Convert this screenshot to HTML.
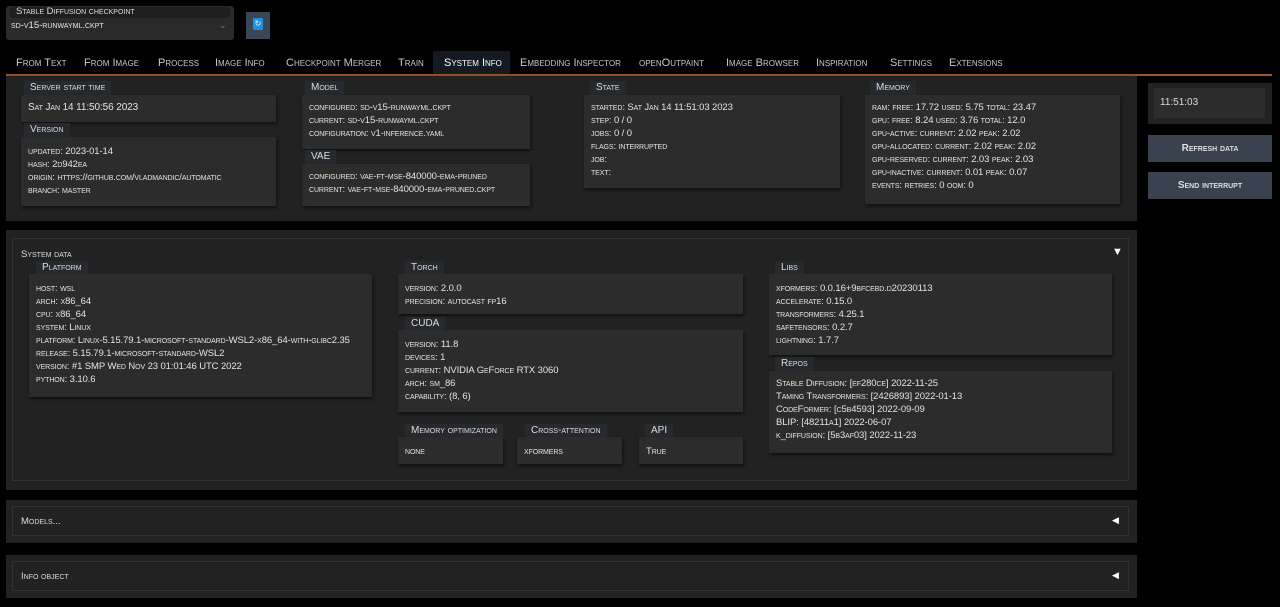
<!DOCTYPE html>
<html><head><meta charset="utf-8">
<style>
*{box-sizing:border-box;margin:0;padding:0}
body{width:1280px;height:607px;background:#000;font-family:"Liberation Sans",sans-serif;font-variant:small-caps;color:#ddd;position:relative;overflow:hidden;font-size:10px}
.a{position:absolute}
.panel{background:#222;box-shadow:0 2px 4px #000}
.box{position:absolute;background:#2c2c2c;box-shadow:1px 2px 3px #111;padding:6px 7px;line-height:13px;font-size:9.5px;color:#e4e4e4;letter-spacing:-0.1px}
.lbl{position:absolute;background:#262a2e;color:#ddd;font-size:10px;height:14px;line-height:14px;padding:0 6px}
.tab{position:absolute;top:55px;font-size:11px;color:#c8c8c8;line-height:16px}
.btn{position:absolute;left:1148px;width:124px;height:27px;background:#3a4250;color:#ddd;font-size:10px;text-align:center;line-height:27px;font-weight:bold;box-shadow:0 1px 2px #000}
</style></head><body>
<div class="a" style="left:6px;top:6px;width:228px;height:34px;background:#2a2a2a;border-radius:3px"></div>
<div class="a" style="left:10px;top:7px;width:220px;height:11px;background:#1e1e1e;border-radius:3px"></div>
<div class="a" style="left:16px;top:6px;font-size:9.5px;color:#ddd">Stable Diffusion checkpoint</div>
<div class="a" style="left:11px;top:20px;font-size:9.5px;color:#e8e8e8">sd-v15-runwayml.ckpt</div>
<div class="a" style="left:219px;top:20px;font-size:9px;color:#777">⌄</div>
<div class="a" style="left:246px;top:12px;width:24px;height:27px;background:#3a4555"></div>
<div class="a" style="left:253px;top:18px;width:10px;height:12px;background:#1e90e0;border-radius:1px;color:#fff;font-size:8px;text-align:center;line-height:12px">↻</div>

<div class="a" style="left:433px;top:51px;width:77px;height:23px;background:#131a22"></div>
<div class="tab" style="left:16px">From Text</div>
<div class="tab" style="left:84px">From Image</div>
<div class="tab" style="left:158px">Process</div>
<div class="tab" style="left:215px">Image Info</div>
<div class="tab" style="left:286px">Checkpoint Merger</div>
<div class="tab" style="left:398px">Train</div>
<div class="tab" style="left:444px;color:#fff">System Info</div>
<div class="tab" style="left:520px">Embedding Inspector</div>
<div class="tab" style="left:639px">openOutpaint</div>
<div class="tab" style="left:726px">Image Browser</div>
<div class="tab" style="left:816px">Inspiration</div>
<div class="tab" style="left:890px">Settings</div>
<div class="tab" style="left:949px">Extensions</div>
<div class="a" style="left:6px;top:74px;width:1266px;height:2px;background:#a0552a"></div>

<div class="a panel" style="left:6px;top:76px;width:1131px;height:145px"></div>
<div class="lbl" style="left:24px;top:81px">Server start time</div>
<div class="box" style="left:21px;top:95px;width:255px;height:27px;font-size:10px">Sat Jan 14 11:50:56 2023</div>
<div class="lbl" style="left:24px;top:123px">Version</div>
<div class="box" style="left:21px;top:137px;width:255px;height:69px;padding-top:8px">updated: 2023-01-14<br>hash: 2d942ea<br>origin: https://github.com/vladmandic/automatic<br>branch: master</div>
<div class="lbl" style="left:305px;top:81px">Model</div>
<div class="box" style="left:302px;top:95px;width:228px;height:54px">configured: sd-v15-runwayml.ckpt<br>current: sd-v15-runwayml.ckpt<br>configuration: v1-inference.yaml</div>
<div class="lbl" style="left:305px;top:150px">VAE</div>
<div class="box" style="left:302px;top:164px;width:228px;height:42px">configured: vae-ft-mse-840000-ema-pruned<br>current: vae-ft-mse-840000-ema-pruned.ckpt</div>
<div class="lbl" style="left:590px;top:81px">State</div>
<div class="box" style="left:584px;top:95px;width:256px;height:93px">started: Sat Jan 14 11:51:03 2023<br>step: 0 / 0<br>jobs: 0 / 0<br>flags: interrupted<br>job:<br>text:</div>
<div class="lbl" style="left:870px;top:81px">Memory</div>
<div class="box" style="left:865px;top:95px;width:255px;height:109px">ram: free: 17.72 used: 5.75 total: 23.47<br>gpu: free: 8.24 used: 3.76 total: 12.0<br>gpu-active: current: 2.02 peak: 2.02<br>gpu-allocated: current: 2.02 peak: 2.02<br>gpu-reserved: current: 2.03 peak: 2.03<br>gpu-inactive: current: 0.01 peak: 0.07<br>events: retries: 0 oom: 0</div>

<div class="a" style="left:1148px;top:83px;width:124px;height:41px;background:#222"></div>
<div class="a" style="left:1154px;top:88px;width:111px;height:30px;background:#2c2c2c;font-size:10px;padding:9px 6px;font-variant:normal">11:51:03</div>
<div class="btn" style="top:135px">Refresh data</div>
<div class="btn" style="top:172px">Send interrupt</div>

<div class="a panel" style="left:6px;top:230px;width:1131px;height:260px"></div>
<div class="a" style="left:12px;top:238px;width:1117px;height:243px;border:1px solid #2f3338"></div>
<div class="a" style="left:21px;top:249px;font-size:9.5px">System data</div>
<div class="a" style="left:1112px;top:246px;font-size:11px;color:#fff">▼</div>
<div class="lbl" style="left:36px;top:261px">Platform</div>
<div class="box" style="left:29px;top:274px;width:343px;height:123px;padding-top:8px">host: wsl<br>arch: x86_64<br>cpu: x86_64<br>system: Linux<br>platform: Linux-5.15.79.1-microsoft-standard-WSL2-x86_64-with-glibc2.35<br>release: 5.15.79.1-microsoft-standard-WSL2<br>version: #1 SMP Wed Nov 23 01:01:46 UTC 2022<br>python: 3.10.6</div>
<div class="lbl" style="left:405px;top:261px">Torch</div>
<div class="box" style="left:398px;top:274px;width:345px;height:40px;padding-top:8px">version: 2.0.0<br>precision: autocast fp16</div>
<div class="lbl" style="left:405px;top:317px">CUDA</div>
<div class="box" style="left:398px;top:330px;width:345px;height:82px;padding-top:8px">version: 11.8<br>devices: 1<br>current: NVIDIA GeForce RTX 3060<br>arch: sm_86<br>capability: (8, 6)</div>
<div class="lbl" style="left:405px;top:424px">Memory optimization</div>
<div class="box" style="left:398px;top:437px;width:105px;height:27px;padding-top:8px">none</div>
<div class="lbl" style="left:525px;top:424px">Cross-attention</div>
<div class="box" style="left:517px;top:437px;width:105px;height:27px;padding-top:8px">xformers</div>
<div class="lbl" style="left:645px;top:424px">API</div>
<div class="box" style="left:639px;top:437px;width:104px;height:27px;padding-top:8px">True</div>
<div class="lbl" style="left:775px;top:261px">Libs</div>
<div class="box" style="left:769px;top:274px;width:343px;height:81px;padding-top:8px">xformers: 0.0.16+9bfcebd.d20230113<br>accelerate: 0.15.0<br>transformers: 4.25.1<br>safetensors: 0.2.7<br>lightning: 1.7.7</div>
<div class="lbl" style="left:775px;top:357px">Repos</div>
<div class="box" style="left:769px;top:371px;width:343px;height:82px;padding-top:6px">Stable Diffusion: [ef280ce] 2022-11-25<br>Taming Transformers: [2426893] 2022-01-13<br>CodeFormer: [c5b4593] 2022-09-09<br>BLIP: [48211a1] 2022-06-07<br>k_diffusion: [5b3af03] 2022-11-23</div>

<div class="a panel" style="left:6px;top:500px;width:1131px;height:43px"></div>
<div class="a" style="left:12px;top:506px;width:1117px;height:30px;border:1px solid #2f3338"></div>
<div class="a" style="left:21px;top:516px;font-size:9.5px">Models...</div>
<div class="a" style="left:1112px;top:515px;font-size:9px;color:#fff">◀</div>
<div class="a panel" style="left:6px;top:555px;width:1131px;height:43px"></div>
<div class="a" style="left:12px;top:561px;width:1117px;height:30px;border:1px solid #2f3338"></div>
<div class="a" style="left:21px;top:571px;font-size:9.5px">Info object</div>
<div class="a" style="left:1112px;top:570px;font-size:9px;color:#fff">◀</div>
</body></html>
